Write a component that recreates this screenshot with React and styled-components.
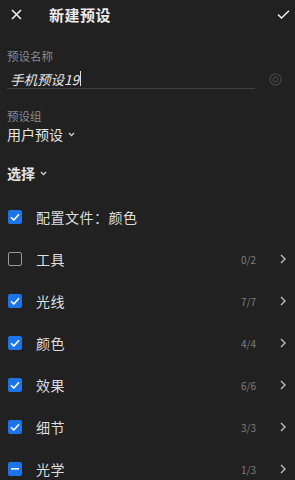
import styled, { createGlobalStyle } from 'styled-components';

const GlobalStyle = createGlobalStyle`
  html, body {
    margin: 0;
    padding: 0;
    background: #212121;
  }
  body {
    font-family: 'Noto Sans CJK SC', 'Noto Sans', sans-serif;
    color: #e2e2e2;
  }
`;

const Screen = styled.div`
  width: 295px;
  height: 480px;
  overflow: hidden;
  background: #212121;
`;

// ---------- header ----------
const Header = styled.div`
  height: 28px;
  display: flex;
  align-items: center;
  padding: 0 5px 0 9px;
`;

const IconButton = styled.span`
  display: flex;
  align-items: center;
  justify-content: center;
  width: 14px;
  height: 14px;
  color: #e8e8e8;
`;

const Title = styled.h1`
  flex: 1;
  margin: 0 0 0 26px;
  font-size: 15px;
  font-weight: 700;
  color: #ececec;
  letter-spacing: 0.5px;
`;

// ---------- form ----------
const Section = styled.div`
  padding: 0 7px;
`;

const FieldLabel = styled.div`
  font-size: 11.5px;
  line-height: 14px;
  color: #8c8c8c;
  margin-top: ${(p) => p.$top || 0}px;
`;

const InputRow = styled.div`
  display: flex;
  align-items: center;
  margin-top: 6px;
`;

const InputLine = styled.div`
  width: 248px;
  height: 20px;
  display: flex;
  align-items: center;
  padding-left: 3px;
  box-sizing: border-box;
  border-bottom: 1px solid #404040;
  font-size: 13.5px;
  font-style: italic;
  color: #e6e6e6;
`;

const Caret = styled.span`
  display: inline-block;
  width: 1px;
  height: 15px;
  background: #e0e0e0;
  margin-left: 1px;
`;

const ClearIcon = styled.span`
  margin-left: 14px;
  display: flex;
  color: #444;
`;

const Dropdown = styled.div`
  display: flex;
  align-items: center;
  gap: 5px;
  margin-top: ${(p) => p.$top || 0}px;
  font-size: 14px;
  line-height: 16px;
  font-weight: ${(p) => (p.$bold ? 700 : 400)};
  color: #e4e4e4;
`;

// ---------- list ----------
const List = styled.div`
  margin-top: 15px;
`;

const Row = styled.div`
  height: 42px;
  display: flex;
  align-items: center;
  padding: 0 9px 0 8px;
`;

const Box = styled.span`
  width: 14px;
  height: 14px;
  box-sizing: border-box;
  border-radius: 2px;
  display: flex;
  align-items: center;
  justify-content: center;
  background: ${(p) => (p.$state === 'off' ? 'transparent' : '#1b74e8')};
  border: ${(p) => (p.$state === 'off' ? '1.5px solid #9a9a9a' : 'none')};
`;

const RowLabel = styled.span`
  flex: 1;
  margin-left: 14px;
  font-size: 14px;
  color: #dedede;
  letter-spacing: 0.5px;
`;

const Count = styled.span`
  font-size: 10px;
  color: #7e7e7e;
  width: 30px;
  text-align: right;
  margin-right: 24px;
`;

const Chevron = styled.span`
  display: flex;
  color: #bdbdbd;
`;

const CheckMark = () => (
  <svg width="10" height="8" viewBox="0 0 10 8">
    <path d="M1 4.2 L3.8 7 L9 1.2" fill="none" stroke="#fff" strokeWidth="1.6" />
  </svg>
);

const DashMark = () => (
  <svg width="8" height="2" viewBox="0 0 8 2">
    <rect width="8" height="1.6" fill="#fff" />
  </svg>
);

const SmallCaret = () => (
  <svg width="7" height="5" viewBox="0 0 7 5">
    <path d="M1 1 L3.5 3.6 L6 1" fill="none" stroke="#d6d6d6" strokeWidth="1.3" />
  </svg>
);

const items = [
  { label: '配置文件：颜色', state: 'on' },
  { label: '工具', state: 'off', count: '0/2' },
  { label: '光线', state: 'on', count: '7/7' },
  { label: '颜色', state: 'on', count: '4/4' },
  { label: '效果', state: 'on', count: '6/6' },
  { label: '细节', state: 'on', count: '3/3' },
  { label: '光学', state: 'mixed', count: '1/3' },
];

export default function App() {
  return (
    <Screen>
      <GlobalStyle />
      <Header>
        <IconButton>
          <svg width="11" height="11" viewBox="0 0 11 11">
            <path d="M1 1 L10 10 M10 1 L1 10" stroke="#eee" strokeWidth="1.6" />
          </svg>
        </IconButton>
        <Title>新建预设</Title>
        <IconButton>
          <svg width="13" height="9" viewBox="0 0 13 9">
            <path d="M1 4.5 L4.5 8 L12 0.8" fill="none" stroke="#eee" strokeWidth="1.5" />
          </svg>
        </IconButton>
      </Header>

      <Section>
        <FieldLabel $top={21}>预设名称</FieldLabel>
        <InputRow>
          <InputLine>
            手机预设19<Caret />
          </InputLine>
          <ClearIcon>
            <svg width="13" height="13" viewBox="0 0 13 13">
              <circle cx="6.5" cy="6.5" r="5.6" fill="none" stroke="currentColor" strokeWidth="1.2" />
              <circle cx="6.5" cy="6.5" r="2.4" fill="none" stroke="currentColor" strokeWidth="1.1" />
            </svg>
          </ClearIcon>
        </InputRow>

        <FieldLabel $top={20}>预设组</FieldLabel>
        <Dropdown $top={3}>
          用户预设 <SmallCaret />
        </Dropdown>

        <Dropdown $top={23} $bold>
          选择 <SmallCaret />
        </Dropdown>
      </Section>

      <List>
        {items.map((it) => (
          <Row key={it.label}>
            <Box $state={it.state}>
              {it.state === 'on' && <CheckMark />}
              {it.state === 'mixed' && <DashMark />}
            </Box>
            <RowLabel>{it.label}</RowLabel>
            {it.count && (
              <>
                <Count>{it.count}</Count>
                <Chevron>
                  <svg width="6" height="10" viewBox="0 0 6 10">
                    <path d="M1 1 L5 5 L1 9" fill="none" stroke="currentColor" strokeWidth="1.4" />
                  </svg>
                </Chevron>
              </>
            )}
          </Row>
        ))}
      </List>
    </Screen>
  );
}
